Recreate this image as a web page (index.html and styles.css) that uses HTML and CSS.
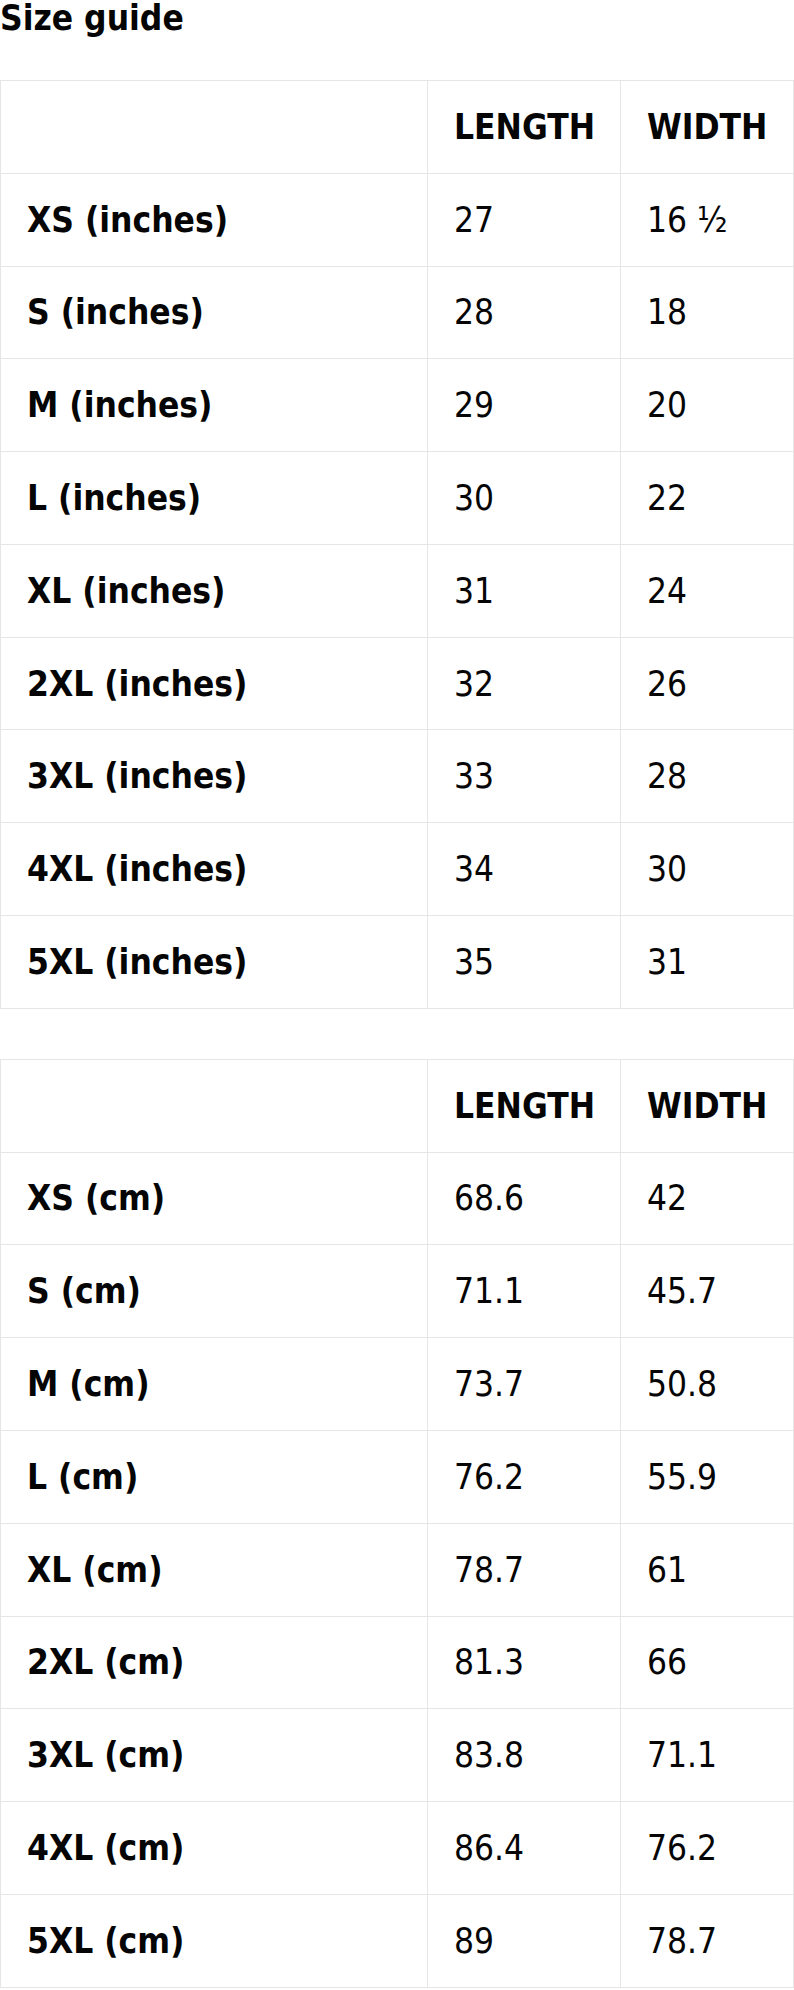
FILE: index.html
```html
<!DOCTYPE html>
<html lang="en">
<head>
<meta charset="utf-8">
<title>Size guide</title>
<link rel="stylesheet" href="styles.css">
</head>
<body>
<div class="guide">
  <h2 class="guide-title">Size guide</h2>
  <table class="sizes">
    <colgroup><col class="c-size"><col class="c-len"><col class="c-wid"></colgroup>
    <thead>
      <tr><th></th><th>LENGTH</th><th>WIDTH</th></tr>
    </thead>
    <tbody>
      <tr><th>XS (inches)</th><td>27</td><td>16 ½</td></tr>
      <tr><th>S (inches)</th><td>28</td><td>18</td></tr>
      <tr><th>M (inches)</th><td>29</td><td>20</td></tr>
      <tr><th>L (inches)</th><td>30</td><td>22</td></tr>
      <tr><th>XL (inches)</th><td>31</td><td>24</td></tr>
      <tr><th>2XL (inches)</th><td>32</td><td>26</td></tr>
      <tr><th>3XL (inches)</th><td>33</td><td>28</td></tr>
      <tr><th>4XL (inches)</th><td>34</td><td>30</td></tr>
      <tr><th>5XL (inches)</th><td>35</td><td>31</td></tr>
    </tbody>
  </table>
  <table class="sizes">
    <colgroup><col class="c-size"><col class="c-len"><col class="c-wid"></colgroup>
    <thead>
      <tr><th></th><th>LENGTH</th><th>WIDTH</th></tr>
    </thead>
    <tbody>
      <tr><th>XS (cm)</th><td>68.6</td><td>42</td></tr>
      <tr><th>S (cm)</th><td>71.1</td><td>45.7</td></tr>
      <tr><th>M (cm)</th><td>73.7</td><td>50.8</td></tr>
      <tr><th>L (cm)</th><td>76.2</td><td>55.9</td></tr>
      <tr><th>XL (cm)</th><td>78.7</td><td>61</td></tr>
      <tr><th>2XL (cm)</th><td>81.3</td><td>66</td></tr>
      <tr><th>3XL (cm)</th><td>83.8</td><td>71.1</td></tr>
      <tr><th>4XL (cm)</th><td>86.4</td><td>76.2</td></tr>
      <tr><th>5XL (cm)</th><td>89</td><td>78.7</td></tr>
    </tbody>
  </table>
</div>
</body>
</html>
```
FILE: styles.css
```css
html, body {
  margin: 0;
  padding: 0;
  background: #ffffff;
}

body {
  font-family: "DejaVu Sans Condensed", "DejaVu Sans", Verdana, sans-serif;
  font-stretch: semi-condensed;
  color: #050505;
}

.guide {
  display: flex;
  flex-direction: column;
  gap: 50px;
}

.guide-title {
  margin: 0 0 -6px 0;
  font-size: 35px;
  line-height: 36px;
  font-weight: bold;
}

.sizes {
  width: 793px;
  border-collapse: collapse;
  table-layout: fixed;
  font-size: 35px;
}

.c-size { width: 427px; }
.c-len { width: 193px; }
.c-wid { width: 173px; }

.sizes th,
.sizes td {
  border: 1px solid #e6e6e6;
  padding: 27.9px 26px;
  line-height: 36px;
  text-align: left;
  vertical-align: middle;
  white-space: nowrap;
}

.sizes th {
  font-weight: bold;
}

.sizes td {
  font-weight: normal;
}
```
